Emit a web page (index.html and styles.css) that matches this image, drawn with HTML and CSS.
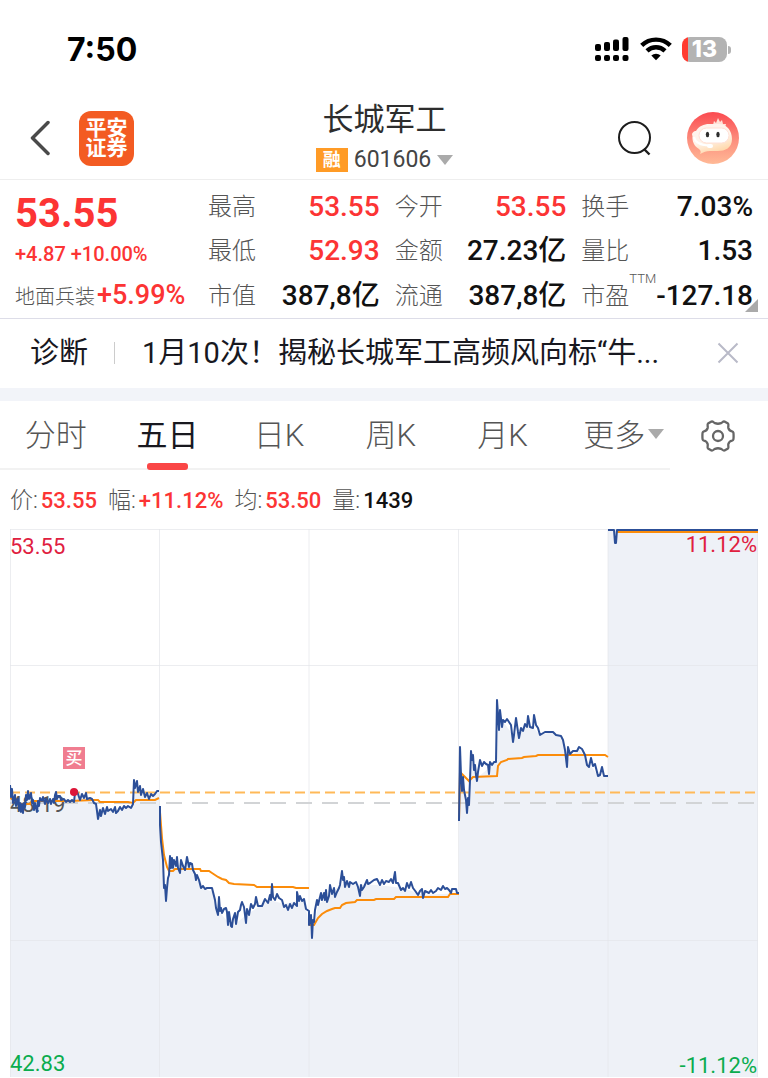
FILE: index.html
```html
<!DOCTYPE html>
<html lang="zh-CN">
<head>
    <meta charset="UTF-8">
    <title>长城军工 601606</title>
    <meta name="viewport" content="width=device-width, initial-scale=1.0">
    <link rel="stylesheet" href="styles.css">
</head>
<body>
<div class="status-bar">
    <span class="time">7:50</span>
    <div class="status-icons">
        <svg width="35" height="26" viewBox="0 0 35 26">
            <rect x="0" y="8" width="6" height="7" rx="2"/>
            <rect x="9" y="6" width="6" height="9" rx="2"/>
            <rect x="18" y="3.500" width="6" height="11.500" rx="2"/>
            <rect x="27.500" y="1" width="6" height="14" rx="2"/>
            <rect x="0" y="19" width="6" height="6" rx="2"/>
            <rect x="9" y="19" width="6" height="6" rx="2"/>
            <rect x="18" y="19" width="6" height="6" rx="2"/>
            <rect x="27.500" y="19" width="6" height="6" rx="2"/>
        </svg>
        <svg width="32" height="26" viewBox="0 0 32 26">
            <path d="M1.700 9.400a20.500 20.500 0 0 1 28.600 0" fill="none" stroke="#000" stroke-width="4.400"/>
            <path d="M7 14.900a13 13 0 0 1 18 0" fill="none" stroke="#000" stroke-width="4.400"/>
            <path d="M11.300 19.500a7 7 0 0 1 9.400 0L16 24.300z"/>
        </svg>
        <div class="battery"><span>13</span></div>
    </div>
</div>

<header class="header">
    <div class="header-side">
        <button class="icon-button back" aria-label="返回">
            <svg width="20" height="36" viewBox="0 0 20 36"><path d="M18 2.500L2.500 18 18 33.500" fill="none" stroke="#4a4a4a" stroke-width="3.500" stroke-linecap="round" stroke-linejoin="round"/></svg>
        </button>
        <a class="logo" href="#">平安证券</a>
    </div>
    <div class="title">
        <h1>长城军工</h1>
        <button class="code"><span class="tag">融</span>601606<i class="arrow"></i></button>
    </div>
    <div class="header-side header-right">
        <button class="icon-button" aria-label="搜索">
            <svg width="36" height="36" viewBox="0 0 36 36"><g fill="none" stroke="#1c1c1c" stroke-width="2"><circle cx="17.500" cy="17.500" r="15.500"/><path d="M27 29l5.500 5.500" stroke-width="2.400"/></g></svg>
        </button>
        <button class="icon-button" aria-label="智能客服">
            <svg width="52" height="52" viewBox="0 0 52 52">
                <defs>
                    <linearGradient id="avatarBg" x1="0" y1="0" x2="0" y2="1"><stop offset="0" stop-color="#fb4a50"/><stop offset=".55" stop-color="#fc8f7e"/><stop offset="1" stop-color="#ffb996"/></linearGradient>
                    <linearGradient id="avatarFace" x1="0" y1="0" x2=".4" y2="1"><stop offset="0" stop-color="#fff2ee"/><stop offset=".6" stop-color="#fff4ea"/><stop offset="1" stop-color="#ffd9ad"/></linearGradient>
                </defs>
                <circle cx="26" cy="26" r="26" fill="url(#avatarBg)"/>
                <path d="M26 13l1-4 2 2 2-5 2 4 2-2 1 4 3 0-1 4z" fill="#ffe2d8"/>
                <path d="M12 37C7 34 5 29 5.500 24C4 21 7 19 9 19C12 14 17 12 22 12H32C40 12 45 19 45 27C45 36 38 39 31 39H23C19 39 17 40 13 42C14 40 14 39 12 37z" fill="url(#avatarFace)"/>
                <rect x="12" y="16" width="30" height="15" rx="7.500" fill="#fff" stroke="#ffe0d6"/>
                <ellipse cx="20.500" cy="22.500" rx="1.700" ry="2.700" fill="#2d2d2d"/>
                <ellipse cx="31" cy="22.500" rx="1.700" ry="2.700" fill="#2d2d2d"/>
                <path d="M7 25C8 31 13 33 22 33.500" fill="none" stroke="#fff" stroke-width="2"/>
                <rect x="20" y="32" width="6" height="4" rx="2" fill="#fff"/>
            </svg>
        </button>
    </div>
</header>

<section class="quote">
    <div class="summary">
        <strong class="price">53.55</strong>
        <span class="change">+4.87 +10.00%</span>
        <span class="sector">地面兵装<b>+5.99%</b></span>
    </div>
    <dl class="stats">
        <div><dt>最高</dt><dd class="up">53.55</dd></div>
        <div><dt>今开</dt><dd class="up">53.55</dd></div>
        <div><dt>换手</dt><dd>7.03%</dd></div>
        <div><dt>最低</dt><dd class="up">52.93</dd></div>
        <div><dt>金额</dt><dd>27.23亿</dd></div>
        <div><dt>量比</dt><dd>1.53</dd></div>
        <div><dt>市值</dt><dd>387,8亿</dd></div>
        <div><dt>流通</dt><dd>387,8亿</dd></div>
        <div><dt>市盈<sup>TTM</sup></dt><dd>-127.18</dd></div>
    </dl>
    <i class="corner"></i>
</section>

<section class="notice">
    <span>诊断</span>
    <i class="divider"></i>
    <a class="notice-text" href="#">1月10次！揭秘长城军工高频风向标“牛...</a>
    <button class="icon-button" aria-label="关闭">
        <svg width="22" height="22" viewBox="0 0 22 22"><path d="M1.500 1.500l19 19M20.500 1.500l-19 19" stroke="#b9bac8" stroke-width="2"/></svg>
    </button>
</section>

<div class="tab-bar">
    <nav class="tabs">
        <button>分时</button>
        <button class="active">五日</button>
        <button>日K</button>
        <button>周K</button>
        <button>月K</button>
        <button>更多<i class="arrow"></i></button>
    </nav>
    <button class="icon-button settings" aria-label="设置">
        <svg width="34" height="34" viewBox="0 0 34 34"><g fill="none" stroke="#666" stroke-width="2.300" stroke-linejoin="round"><path d="M10.500 2.500C12 2 12.500 3.500 14 4.200Q17 5.300 20 4.200C21.500 3.500 22 2 23.500 2.500L27 4.600C28 5.500 27 7 27.300 8.800Q28.200 11.800 31 12.300C32.500 12.700 32.600 13.500 32.600 17S32.500 21.300 31 21.700Q28.200 22.200 27.300 25.200C27 27 28 28.500 27 29.400L23.500 31.500C22 32 21.500 30.500 20 29.800Q17 28.700 14 29.800C12.500 30.500 12 32 10.500 31.500L7 29.400C6 28.500 7 27 6.700 25.200Q5.800 22.200 3 21.700C1.500 21.300 1.400 20.500 1.400 17S1.500 12.700 3 12.300Q5.800 11.800 6.700 8.800C7 7 6 5.500 7 4.600z"/><circle cx="17" cy="17" r="5"/></g></svg>
    </button>
</div>

<div class="readout">
    <span>价:<b class="up">53.55</b></span>
    <span>幅:<b class="up">+11.12%</b></span>
    <span>均:<b class="up">53.50</b></span>
    <span>量:<b>1439</b></span>
</div>

<main class="chart">
    <svg viewBox="10 529 748 548" role="img" aria-label="五日走势图">
        <!-- area under the price line -->
        <g class="area">
            <path d="M10 1077V793L20 808 28 797 37 806 56 797 74 800 77 791 87 797 97 808 115 809 133 806 135 785 149 797 159 791 160 806 163 860 166 901 170 866 190 864 205 889 213 892 218 910 232 927 246 915 270 900 284 904 304 899 309 925 312 938 318 905 340 885 345 884 377 885 403 888 423 895 459 893V1077z"/>
            <path d="M459 1077V800L463 777 467 813 471 760 477 778 496 762 498 715 513 735 528 722 540 735 553 732 563 740 567 760 579 749 598 776 608 776V1077z"/>
            <path d="M608 529H758V1077H608z"/>
        </g>
        <g class="grid">
            <path d="M10 529.500H758M10 665.500H758M10 940.500H758"/>
            <path d="M10.500 529V1077M159.500 529V1077M309 529V1077M458.500 529V1077M608 529V1077M757.500 529V1077"/>
        </g>
        <path class="middle" d="M10 803H758"/>
        <text class="label" x="10" y="812">48.19</text>
        <path class="cost" d="M10 792.500H758"/>
        <g class="average">
            <polyline points="10,798 14,800 21,804 30,804 32,801 55,801 70,801 93,800 98,800 100,802 128,802 133,803 136,800 155,800 159,798"/>
            <polyline points="160,812 162,838 164,855 167,867 169,871 173,871 175,869 200,869 201,871 209,871 212,873 215,875 218,877 222,879 226,880 229,883 234,884 254,885 257,887 293,887 296,888 309,888"/>
            <polyline points="309,925 314,925 318,918 322,914 327,911 332,909 335,908 340,908 342,905 346,903 355,902 357,900 374,900 376,899 394,899 396,897 448,897 450,894 459,894"/>
            <polyline points="459,821 460,772 464,776 469,781 473,777 497,776 498,766 501,762 507,760 508,759 522,758 524,757 536,756 538,755 605,755 608,757"/>
            <polyline points="617,532 758,532"/>
        </g>
        <g class="line">
            <polyline points="10,785 11,797 12,789 13,803 15,795 16,806 18,799 19,810 20,803 21,812 22,804 23,813 24,803 25,807 26,795 27,800 28,791 29,799 31,793 32,803 33,800 34,810 35,803 37,812 38,801 39,806 40,798 42,801 43,797 45,804 46,799 48,803 50,799 51,804 53,799 54,803 55,795 56,792 57,799 58,796 60,796 61,800 64,799 66,802 68,800 70,802 72,800 74,802 75,793 77,791 79,797 80,800 82,794 84,798 86,793 87,799 90,798 92,799 94,803 96,804 97,811 98,819 100,810 101,816 103,808 105,814 107,807 108,811 111,809 113,812 115,807 116,813 118,811 120,807 122,810 124,806 126,808 128,806 131,808 133,804 134,780 135,788 137,781 138,792 140,786 141,795 143,789 145,797 147,793 149,799 151,794 153,796 155,794 157,791 159,791"/>
            <polyline points="160,806 160,825 161,842 163,860 164,888 165,885 166,901 167,888 168,878 169,875 170,856 171,868 172,858 173,868 174,860 176,866 177,857 178,868 180,873 181,860 183,866 185,870 187,857 188,862 189,867 190,863 192,864 193,870 195,874 196,880 197,875 199,880 201,888 203,886 205,889 207,888 212,888 213,892 215,900 216,908 218,915 219,897 220,911 221,908 222,913 224,909 226,908 227,912 228,925 229,912 231,926 232,927 233,919 235,913 236,924 238,912 240,910 241,905 242,902 244,907 246,923 247,909 249,915 251,904 253,908 255,904 256,897 258,906 262,906 265,899 268,903 270,895 271,900 272,884 273,897 275,900 277,894 279,898 282,900 284,907 286,905 288,910 290,904 292,908 294,903 297,906 297,892 299,901 300,896 302,901 304,899 306,909 309,911 309,925 311,915 312,938 313,920 314,922 315,910 316,905 317,900 318,905 320,897 321,893 322,900 324,893 325,900 326,890 327,902 329,896 330,885 332,894 334,888 335,897 337,892 339,888 340,885 342,871 343,880 344,877 345,887 347,881 349,887 350,882 353,884 356,882 358,887 360,896 361,885 362,890 364,887 367,880 368,884 370,883 374,880 377,879 380,885 382,880 384,884 386,881 389,882 391,879 393,883 395,872 396,883 398,883 401,890 403,888 405,891 407,883 409,888 411,882 413,888 416,892 418,895 420,891 422,889 423,898 425,891 429,893 431,890 433,893 436,891 438,888 441,890 443,886 445,889 447,888 449,890 451,893 452,889 456,889 457,893 459,893"/>
            <polyline points="459,821 460,747 461,775 462,791 463,777 464,790 466,800 467,813 468,798 469,805 470,780 471,751 472,760 473,755 474,770 475,765 476,775 477,781 478,772 480,760 482,766 484,762 486,764 488,765 489,774 490,762 492,765 494,762 496,762 497,700 498,715 499,730 500,710 502,727 503,720 505,722 507,719 509,722 511,725 513,742 514,735 516,718 518,732 519,738 521,728 523,731 525,724 527,727 528,716 530,727 533,728 534,715 536,725 538,728 540,735 545,732 553,732 556,735 561,736 563,740 565,750 567,767 568,747 570,754 573,751 577,751 579,747 582,749 585,755 587,765 589,767 591,758 593,766 595,764 598,776 600,775 602,767 604,776 608,776"/>
            <polyline points="608,530 614,530 615,543 616,543 617,530 758,530"/>
        </g>
        <!-- buy marker -->
        <circle cx="74" cy="792" r="4" fill="#dc1638"/>
        <rect x="63" y="747" width="22" height="22" fill="#f07d90"/>
        <text class="buy" x="74" y="764" text-anchor="middle">买</text>
        <text class="label high" x="10" y="554">53.55</text>
        <text class="label high" x="757" y="552" text-anchor="end">11.12%</text>
        <text class="label low" x="10" y="1071">42.83</text>
        <text class="label low" x="757" y="1073" text-anchor="end">-11.12%</text>
    </svg>
</main>
</body>
</html>
```

FILE: styles.css
```css
* {
    box-sizing: border-box;
}
body {
    margin: 0;
    background: #fff;
    color: #111;
    font-family: Roboto, "Noto Sans CJK SC", sans-serif;
}
button {
    padding: 0;
    border: 0;
    background: none;
    color: inherit;
    font: inherit;
    cursor: pointer;
}
a {
    color: inherit;
    text-decoration: none;
}
svg {
    display: block;
}
.icon-button {
    flex: none;
}
.up {
    color: #fc3434;
}
.arrow {
    border: 8px solid transparent;
    border-top: 10px solid #aaa;
    border-bottom: 0;
}

/* status bar */
.status-bar {
    display: flex;
    justify-content: space-between;
    align-items: center;
    height: 98px;
    padding: 0 41px 0 67px;
}
.time {
    color: #000;
    font: bold 32px Inter, sans-serif;
}
.status-icons {
    display: flex;
    align-items: center;
    gap: 10px;
}
.battery {
    position: relative;
    width: 45px;
    height: 25px;
    border-radius: 8px;
    background: linear-gradient(to right, #ff3b30 6px, #b3b3b3 6px);
    color: #fff;
    font: 800 23px/25px Inter, sans-serif;
    text-align: center;
}
.battery::after {
    content: "";
    position: absolute;
    right: -4px;
    top: 9px;
    width: 3px;
    height: 8px;
    border-radius: 0 4px 4px 0;
    background: #b3b3b3;
}

/* header */
.header {
    display: grid;
    grid-template-columns: 1fr auto 1fr;
    align-items: center;
    height: 82px;
    padding: 0 29px 8px 30px;
    border-bottom: 1px solid #eee;
}
.header-side {
    display: flex;
    align-items: center;
    gap: 29px;
}
.header-right {
    justify-content: flex-end;
    gap: 34px;
}
.logo {
    width: 55px;
    height: 55px;
    padding: 7px 5px;
    border-radius: 12px;
    background: #f35b22;
    color: #fff;
    font-size: 21px;
    font-weight: bold;
    line-height: 20px;
    text-align: center;
}
.title {
    text-align: center;
}
h1 {
    margin: 0;
    color: #2d2d2d;
    font-size: 31px;
    font-weight: 400;
    line-height: 44px;
}
.code {
    display: flex;
    align-items: center;
    gap: 6px;
    color: #444;
    font-size: 23px;
    line-height: 36px;
}
.tag {
    width: 32px;
    height: 24px;
    background: #ff9b26;
    color: #fff;
    font-size: 18px;
    font-weight: bold;
    line-height: 24px;
}

/* quote */
.quote {
    position: relative;
    display: grid;
    grid-template-columns: 178px 1fr;
    gap: 15px;
    padding: 5px 15px 0;
    border-bottom: 1px solid #dddde8;
}
.summary {
    display: flex;
    flex-direction: column;
    color: #fc3434;
    white-space: nowrap;
}
.price {
    font-size: 40px;
    line-height: 58px;
}
.change {
    font-size: 20px;
    font-weight: 500;
    line-height: 22px;
}
.sector {
    display: flex;
    align-items: center;
    height: 46px;
    margin-top: 7px;
    color: #555;
    font-size: 20px;
    font-weight: 300;
}
.sector b {
    margin-left: 2px;
    color: #fc3434;
    font-size: 27px;
    font-weight: 500;
}
.stats {
    display: grid;
    grid-template-columns: repeat(3, 1fr);
    column-gap: 15px;
    margin: 0;
}
.stats div {
    display: flex;
    justify-content: space-between;
    height: 44px;
    line-height: 44px;
    white-space: nowrap;
}
.stats dt {
    position: relative;
    color: #555;
    font-size: 24px;
    font-weight: 300;
}
.stats sup {
    position: absolute;
    left: 100%;
    top: -3px;
    font-size: 13px;
    line-height: 16px;
}
.stats dd {
    margin: 0;
    font-size: 28px;
    font-weight: 500;
}
.corner {
    position: absolute;
    right: 10px;
    bottom: 6px;
    border-left: 13px solid transparent;
    border-bottom: 13px solid #aaa;
}

/* notice */
.notice {
    display: flex;
    align-items: center;
    height: 82px;
    padding: 0 29px 2px 30px;
    border-bottom: 13px solid #f2f4f9;
    color: #18181f;
    font-size: 29px;
    line-height: 40px;
}
.divider {
    width: 1px;
    height: 22px;
    margin: 0 27px 0 26px;
    background: #ccc;
}
.notice-text {
    flex: 1;
    overflow: hidden;
    white-space: nowrap;
}

/* tabs */
.tab-bar {
    display: flex;
    align-items: center;
    height: 69px;
}
.tabs {
    display: grid;
    grid-template-columns: repeat(6, 1fr);
    flex: 1;
    height: 69px;
    border-bottom: 2px solid #f2f2f2;
}
.tabs button {
    position: relative;
    padding-bottom: 5px;
    color: #555;
    font-size: 31px;
    font-weight: 300;
}
.tabs .active {
    color: #18181f;
    font-weight: 400;
}
.tabs .active::after {
    content: "";
    position: absolute;
    left: calc(50% - 20px);
    bottom: -2px;
    width: 41px;
    height: 7px;
    border-radius: 3px;
    background: #fa4646;
}
.tabs .arrow {
    position: absolute;
    left: calc(50% + 34px);
    top: 28px;
}
.settings {
    margin: 0 33px 0 31px;
}

/* chart */
.readout {
    display: flex;
    align-items: center;
    gap: 11px;
    height: 59px;
    padding: 0 10px 3px;
    color: #555;
    font-size: 23px;
    font-weight: 300;
}
.readout b {
    margin-left: 3px;
    font-size: 22px;
    font-weight: 500;
}
.readout b:not(.up) {
    color: #111;
}
.chart {
    padding: 0 10px;
}
.chart svg {
    width: 100%;
}
.area {
    fill: #eef1f7;
}
.grid {
    fill: none;
    stroke: #e4e6e9;
    stroke-opacity: 0.7;
}
.middle {
    stroke: #d2d4d6;
    stroke-width: 2;
    stroke-dasharray: 16 10;
}
.cost {
    stroke: #ffb958;
    stroke-width: 2;
    stroke-dasharray: 10 5;
}
.average {
    fill: none;
    stroke: #fb8c0a;
    stroke-width: 2;
}
.line {
    fill: none;
    stroke: #2c4f98;
    stroke-width: 2;
    stroke-linejoin: round;
}
.label {
    fill: #555;
    font-size: 22px;
}
.high {
    fill: #e0203f;
}
.low {
    fill: #0aac4e;
}
.buy {
    fill: #fff;
    font-size: 17px;
    font-weight: 500;
}
```
